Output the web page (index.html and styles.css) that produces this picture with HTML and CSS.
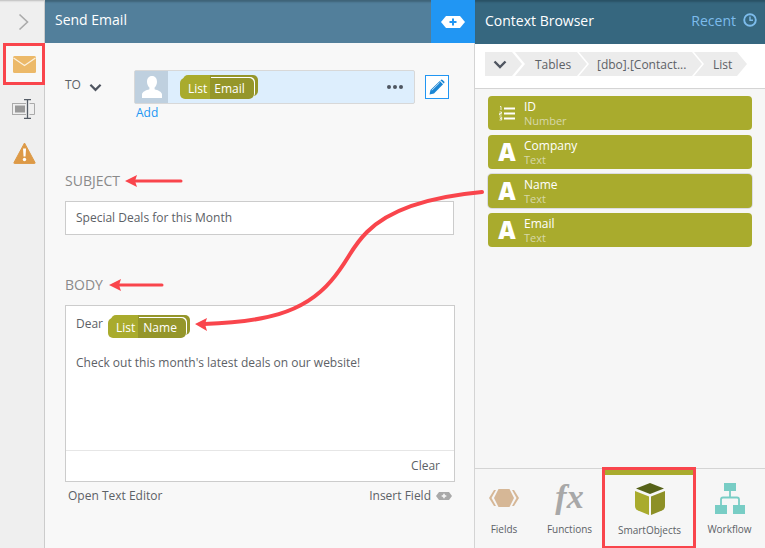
FILE: index.html
```html
<!DOCTYPE html>
<html lang="en">
<head>
<meta charset="utf-8">
<title>Send Email</title>
<link rel="stylesheet" href="styles.css">
</head>
<body>
<div class="app">
  <nav class="rail">
    <div class="rail-top">
      <svg width="12" height="18" viewBox="0 0 12 18"><path d="M1.500 1.500 9.500 9l-8 7.500" fill="none" stroke="#aaa" stroke-width="1.600"/></svg>
    </div>
    <div class="rail-item selected">
      <svg width="23" height="17" viewBox="0 0 23 17"><rect width="23" height="17" rx="1.500" fill="#ecb969"/><path d="M0.500 2 11.500 9.500 22.500 2" fill="none" stroke="#fbf1de" stroke-width="1.200"/></svg>
    </div>
    <div class="rail-item rail-item-first">
      <svg width="24" height="20" viewBox="0 0 24 20"><rect x="0.500" y="4.500" width="21" height="11" fill="none" stroke="#aaa"/><rect x="3" y="6.500" width="10" height="7" fill="#999"/><rect x="14" y="3" width="10" height="14" fill="#efefef"/><path d="M17.500 4.500H22.500V15.500H17.500" fill="none" stroke="#aaa"/><path d="M12 .7h7M15.500.7v18.600M12 19.300h7" fill="none" stroke="#555c66" stroke-width="1.300"/></svg>
    </div>
    <div class="rail-item">
      <svg width="23" height="22" viewBox="0 0 23 22"><path d="M11.500 1 22 20.500a.6.6 0 0 1-.5.900H1.500a.6.6 0 0 1-.5-.9Z" fill="#dd9a47" stroke="#dd9a47" stroke-linejoin="round"/><path d="M10 6.500h3l-.5 8h-2Z" fill="#fff"/><circle cx="11.500" cy="17.500" r="1.700" fill="#fff"/></svg>
    </div>
  </nav>

  <main class="editor">
    <header class="editor-head">
      <h1 class="head-title">Send Email</h1>
      <button class="head-add" type="button">
        <svg width="24" height="12" viewBox="0 0 24 12"><path d="M5 0h14l5 6-5 6H5L0 6Z" fill="#fff"/><path d="M12 2.500v7M8.500 6h7" stroke="#2196f3" stroke-width="2"/></svg>
      </button>
    </header>
    <div class="editor-body">
      <div class="to-row">
        <div class="to-label">TO
          <svg class="to-chevron" width="13" height="9" viewBox="0 0 14 9"><path d="M1.500 1.500 7 7l5.500-5.500" fill="none" stroke="#4f5560" stroke-width="2.400"/></svg>
        </div>
        <div class="to-col">
          <div class="to-box">
            <div class="avatar">
              <svg width="20" height="22" viewBox="0 0 20 22"><path d="M10 0c3.300 0 5 2.600 5 5.800 0 2.400-1 4.500-2.400 5.700v1.700c3 1 7.400 2.400 7.400 5.300V22H0v-3.500c0-2.900 4.400-4.300 7.400-5.300v-1.700C6 10.300 5 8.200 5 5.800 5 2.600 6.700 0 10 0Z" fill="#fff"/></svg>
            </div>
            <span class="token"><span class="token-a">List</span><span class="token-b">Email</span></span>
            <span class="dots"><i></i><i></i><i></i></span>
          </div>
          <a class="add-link">Add</a>
        </div>
        <button class="pencil" type="button">
          <svg width="16" height="16" viewBox="0 0 16 16"><path d="M.5 15.500 1.500 11 10.800 1.900l3.300 3.300L5 14.500Z" fill="#1b86d4"/><path d="M11.800.9a1.300 1.300 0 0 1 1.800 0l1.500 1.500a1.300 1.300 0 0 1 0 1.800l-.4.400-3.300-3.300Z" fill="#1b86d4"/><path d="M2.800 11.300 10.600 3.600" stroke="#fff" stroke-width=".7"/></svg>
        </button>
      </div>

      <h2 class="section-label subject-label">SUBJECT</h2>
      <div class="subject-input">Special Deals for this Month</div>

      <h2 class="section-label body-label">BODY</h2>
      <div class="body-box">
        <div class="body-text">
          <div class="dear-line">Dear <span class="token token-dear"><span class="token-a">List</span><span class="token-b">Name</span></span></div>
          <p class="body-para">Check out this month's latest deals on our website!</p>
        </div>
        <div class="body-foot">Clear</div>
      </div>
      <div class="below-row">
        <span>Open Text Editor</span>
        <span class="insert">Insert Field
          <svg width="16" height="8" viewBox="0 0 16 8"><path d="M3 0h10l3 4-3 4H3L0 4Z" fill="#a9a9a9"/><path d="M8 1.700v4.600M5.700 4h4.600" stroke="#f8f8f8" stroke-width="1.500"/></svg>
        </span>
      </div>
    </div>
  </main>

  <aside class="context">
    <header class="context-head">
      <span class="context-title">Context Browser</span>
      <span class="recent">Recent
        <svg width="14" height="14" viewBox="0 0 15 15"><circle cx="7.500" cy="7.500" r="6.200" fill="none" stroke="#7dbcec" stroke-width="2"/><path d="M7.500 3.800v4h3.200" fill="none" stroke="#7dbcec" stroke-width="1.500"/></svg>
      </span>
    </header>
    <div class="crumbs-wrap">
      <div class="crumbs">
        <span class="crumb crumb-first"><svg width="14" height="9" viewBox="0 0 14 9"><path d="M1.500 1.500 7 7l5.500-5.500" fill="none" stroke="#4f5560" stroke-width="2.400"/></svg></span>
        <span class="crumb crumb-tables">Tables</span>
        <span class="crumb crumb-long">[dbo].[Contact...</span>
        <span class="crumb crumb-last">List</span>
      </div>
    </div>
    <div class="fields">
      <div class="field">
        <span class="field-icon">
          <svg width="16" height="15" viewBox="0 0 16 15"><path d="M5 2.500h11M5 7.500h11M5 12.500h11" stroke="#fff" stroke-width="1.800"/><path d="M1 .5h1v3.500M.5 6h2v1.500h-2v1.500h2.200M.5 11h2.200v3H.5M1 12.500h1.500" fill="none" stroke="#fff" stroke-width=".8"/></svg>
        </span>
        <span class="field-text"><b>ID</b><small>Number</small></span>
      </div>
      <div class="field"><span class="field-icon glyph">A</span><span class="field-text"><b>Company</b><small>Text</small></span></div>
      <div class="field field-outlined"><span class="field-icon glyph">A</span><span class="field-text"><b>Name</b><small>Text</small></span></div>
      <div class="field"><span class="field-icon glyph">A</span><span class="field-text"><b>Email</b><small>Text</small></span></div>
    </div>
    <div class="tabs">
      <div class="tab tab-fields">
        <svg width="32" height="20" viewBox="0 0 32 20"><path d="M6 2 1 10l5 8h2L3.500 10 8 2Z" fill="#d6b796"/><path d="M26 2l5 8-5 8h-2l4.500-8L24 2Z" fill="#d6b796"/><path d="M10.500 1h11l4.500 9-4.500 9h-11L6 10Z" fill="#d6b796"/></svg>
        <span>Fields</span>
      </div>
      <div class="tab tab-functions">
        <span class="fx">fx</span>
        <span>Functions</span>
      </div>
      <div class="tab tab-smart">
        <svg width="30" height="32" viewBox="0 0 30 32"><path d="M15 0 29 5.500 15 11 1 5.500Z" fill="#556117"/><path d="M0 8 14 13.500V32L3 27.500C1 26.500 0 25 0 23Z" fill="#a9ab2d"/><path d="M30 8 16 13.500V32l11-4.500c2-1 3-2.500 3-4.500Z" fill="#8d9026"/></svg>
        <span>SmartObjects</span>
      </div>
      <div class="tab tab-workflow">
        <svg width="30" height="31" viewBox="0 0 30 31"><rect x="9" y="0" width="12" height="8" fill="#78cdc5"/><rect x="0" y="22" width="12" height="9" fill="#78cdc5"/><rect x="18" y="22" width="12" height="9" fill="#78cdc5"/><path d="M15 8v6M6 22v-5.500a2 2 0 0 1 2-2h14a2 2 0 0 1 2 2V22" fill="none" stroke="#78cdc5" stroke-width="1.800"/></svg>
        <span>Workflow</span>
      </div>
    </div>
  </aside>
</div>
<svg class="annotations" width="765" height="548" viewBox="0 0 765 548">
  <g fill="none" stroke="#f9454c" stroke-linecap="round">
    <path stroke-width="4" d="M482 192C438 196 392 207 367 232 350 249 349 260 331 281 303 314 262 322 204 324"/>
    <path stroke-width="3" d="M132 181H181"/>
    <path stroke-width="3" d="M116 285H162"/>
  </g>
  <g fill="#f9454c">
    <path d="M125 181 137 175 135 181 137 187Z"/>
    <path d="M109 285 121 279 119 285 121 291Z"/>
    <path d="M195 324 207 318 205 324 207 331Z"/>
  </g>
</svg>
```

FILE: styles.css
```css
* { box-sizing: border-box; }
html, body { margin: 0; padding: 0; }
body {
  width: 765px;
  height: 548px;
  overflow: hidden;
  position: relative;
  font-family: "Open Sans", "Liberation Sans", sans-serif;
  font-size: 12px;
  color: #5c6166;
  background: #f8f8f8;
}
.app { display: flex; width: 765px; height: 548px; }

.rail {
  width: 45px;
  flex: none;
  background: #efefef;
  border-right: 1px solid #ccc;
  box-shadow: inset 0 3px 2px -2px #bbb;
}
.rail-top { height: 43px; display: flex; align-items: center; justify-content: center; padding-left: 4px; }
.rail-item { height: 44px; display: flex; align-items: center; justify-content: center; padding-left: 4px; }
.rail-item-first { margin-top: 2px; }
.rail-item.selected { width: 42px; height: 42px; margin-left: 3px; padding-left: 0; background: #f8f8f8; border: 3px solid #f9454c; }

.editor { width: 430px; flex: none; display: flex; flex-direction: column; border-right: 1px solid #d4d4d4; }
.editor-head {
  height: 43px;
  flex: none;
  display: flex;
  background: #527f9b;
  box-shadow: inset 0 3px 2px -1px #3f6478;
}
.head-title { flex: 1; margin: 0; padding-left: 10px; font-size: 14px; font-weight: 400; line-height: 40px; color: #fff; }
.head-add { width: 44px; border: 0; padding: 0; background: #2196f3; display: flex; align-items: center; justify-content: center; margin-right: -1px; }
.editor-body { flex: 1; padding: 27px 20px 0; display: flex; flex-direction: column; }

.to-row { display: flex; height: 63px; flex: none; }
.to-label { width: 69px; flex: none; padding-top: 7px; font-size: 12px; line-height: 16px; display: flex; gap: 8px; align-items: flex-start; }
.to-chevron { margin-top: 6px; }
.to-col { width: 281px; flex: none; }
.to-box {
  height: 34px;
  display: flex;
  align-items: center;
  background: #ddeefd;
  border: 1px solid #d8d8d8;
  border-radius: 2px;
}
.avatar { width: 33px; height: 32px; flex: none; background: #bfd0df; display: flex; align-items: flex-end; justify-content: center; padding-bottom: 5px; }
.token {
  display: inline-flex;
  height: 21px;
  margin-left: 12px;
  margin-top: 2px;
  color: #fff;
  font-size: 12px;
  line-height: 21px;
  border-radius: 5px;
  position: relative;
}
.token::before {
  content: "";
  position: absolute;
  top: -3px;
  right: -4px;
  left: 3px;
  bottom: 3px;
  background: linear-gradient(90deg, #a9ab2d 0, #a9ab2d 27px, #95962a 27px);
  border-radius: 5px;
}
.token-a { position: relative; z-index: 1; background: #a9ab2d; padding: 0 3px 0 8px; border-radius: 5px 0 0 5px; }
.token-b { position: relative; z-index: 1; background: #95962a; padding: 0 9px 0 4px; border-radius: 0 5px 5px 0; box-shadow: 1px -1px 0 #fff; }
.dots { margin-left: auto; margin-right: 11px; display: flex; gap: 2px; }
.dots i { width: 4px; height: 4px; border-radius: 50%; background: #4f5560; }
.add-link { display: block; margin: 1px 0 0 2px; line-height: 16px; color: #2196f3; }
.pencil {
  width: 24px;
  height: 24px;
  flex: none;
  margin: 5px 0 0 10px;
  padding: 0;
  background: #fff;
  border: 1px solid #2196f3;
  display: flex;
  align-items: center;
  justify-content: center;
}

.section-label { margin: 0; font-size: 14px; font-weight: 400; line-height: 20px; color: #8a8a8a; }
.subject-label { margin-top: 38px; }
.subject-input {
  height: 34px;
  margin-top: 10px;
  width: 389px;
  background: #fff;
  border: 1px solid #ccc;
  padding-left: 10px;
  line-height: 31px;
  color: #5c6166;
}
.body-label { margin-top: 40px; }
.body-box {
  width: 390px;
  height: 177px;
  margin-top: 10px;
  background: #fff;
  border: 1px solid #ccc;
  display: flex;
  flex-direction: column;
}
.body-text { flex: 1; padding: 10px 10px 0; }
.dear-line { display: flex; line-height: 16px; height: 22px; }
.token-dear { margin-left: 5px; margin-top: 2px; height: 20px; line-height: 20px; }
.token-dear .token-b { padding-left: 5px; }
.body-para { margin: 17px 0 0; line-height: 16px; }
.body-foot { height: 31px; flex: none; border-top: 1px solid #e6e6e6; text-align: right; padding-right: 14px; line-height: 29px; }
.below-row { display: flex; justify-content: space-between; width: 389px; padding: 5px 2px 0 3px; line-height: 18px; }
.insert { display: inline-flex; align-items: center; gap: 5px; }

.context { flex: 1; display: flex; flex-direction: column; background: #f6f6f6; }
.context-head {
  height: 44px;
  flex: none;
  display: flex;
  align-items: center;
  justify-content: space-between;
  padding: 0 8px 4px 10px;
  background: #36677f;
  box-shadow: inset 0 3px 2px -1px #2a5266;
  color: #fff;
  font-size: 14px;
}
.recent { color: #7dbcec; display: inline-flex; align-items: center; gap: 7px; }
.crumbs-wrap { height: 45px; flex: none; background: #fff; border-bottom: 1px solid #d4d4d4; padding: 8px 0 0 10px; }
.crumbs { display: flex; height: 24px; }
.crumb {
  display: flex;
  align-items: center;
  height: 24px;
  flex: none;
  background: #ececec;
  color: #5c6166;
  font-size: 12px;
  clip-path: polygon(0 0, calc(100% - 10px) 0, 100% 50%, calc(100% - 10px) 100%, 0 100%, 10px 50%);
}
.crumb-first { width: 37px; padding-left: 8px; margin-right: -7px; clip-path: polygon(0 0, calc(100% - 10px) 0, 100% 50%, calc(100% - 10px) 100%, 0 100%); }
.crumb-tables { width: 72px; padding-left: 20px; margin-right: -8px; }
.crumb-long { width: 123px; padding-left: 18px; margin-right: -8px; }
.crumb-last { width: 53px; padding-left: 19px; }

.fields { flex: 1; padding: 7px 13px 0; display: flex; flex-direction: column; gap: 5px; }
.field { width: 264px; height: 34px; flex: none; background: #a9ab2d; border-radius: 4px; display: flex; align-items: center; color: #fff; position: relative; }
.field-outlined { box-shadow: 0 0 0 1px #dcdce2; }
.field-icon { width: 36px; flex: none; display: flex; justify-content: center; padding-left: 2px; }
.glyph { font-family: "Open Sans", sans-serif; font-weight: 800; font-size: 24px; line-height: 28px; }
.field-text { display: flex; flex-direction: column; align-self: flex-start; padding-top: 4px; }
.field-text b { font-weight: 400; font-size: 12px; line-height: 14px; }
.field-text small { font-size: 11px; line-height: 14px; color: #d7d8a8; }

.tabs { height: 80px; flex: none; display: flex; border-top: 1px solid #d4d4d4; }
.tab { display: flex; flex-direction: column; align-items: center; justify-content: flex-end; font-size: 10px; line-height: 14px; padding-bottom: 12px; color: #5c6166; }
.tab-fields { width: 58px; }
.tab-fields svg { margin-bottom: 14px; }
.tab-functions { width: 69px; padding-left: 4px; }
.fx { font-family: "Liberation Serif", serif; font-style: italic; font-weight: 700; font-size: 34px; line-height: 34px; color: #a8a8a8; margin-bottom: 8px; }
.tab-smart { width: 94px; height: 82px; margin-top: -2px; border: 3px solid #f9454c; background: #f6f6f6; padding-bottom: 9px; padding-left: 1px; position: relative; }
.tab-smart::before { content: ""; position: absolute; left: 0; right: 0; top: 0; height: 5px; background: #a9ab2d; }
.tab-smart svg { margin-bottom: 8px; }
.tab-workflow { flex: 1; padding-right: 2px; }
.tab-workflow svg { margin-bottom: 8px; }

.annotations { position: absolute; left: 0; top: 0; pointer-events: none; }
```
